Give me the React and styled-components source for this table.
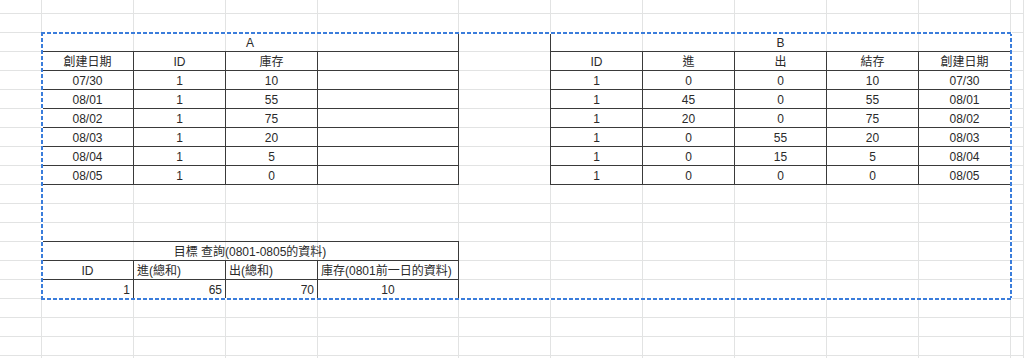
import React from 'react'
import styled, { createGlobalStyle } from 'styled-components'

const GlobalStyle = createGlobalStyle`
  html, body {
    margin: 0;
    padding: 0;
    background: #fff;
  }
  body {
    font-family: 'Liberation Sans', Arial, 'Noto Sans CJK TC', sans-serif;
    font-size: 12px;
    color: #2a2a2a;
  }
`

const COLS = '42px repeat(3, 92px) 141px repeat(6, 92px) 1fr'
const ROWS = '14px repeat(19, 19px)'
const ROW_COUNT = 20
const COL_COUNT = 12

const Page = styled.div`
  width: 1024px;
  height: 358px;
  overflow: hidden;
  display: grid;
`

const Layer = styled.div`
  grid-area: 1 / 1;
  display: grid;
  grid-template-columns: ${COLS};
  grid-template-rows: ${ROWS};
`

const GridCell = styled.div`
  box-sizing: border-box;
  border-right: 1px solid #e2e3e3;
  border-bottom: 1px solid #e2e3e3;
`

const Placed = styled.div`
  grid-column: ${p => p.$col};
  grid-row: ${p => p.$row};
  margin: -1px 0 0 -1px;
`

const Table = styled.div`
  display: grid;
  grid-template-columns: ${p => p.$cols};
  grid-auto-rows: 19px;
  border-left: 1px solid #3a3a3a;
  border-top: 1px solid #3a3a3a;
`

const TCell = styled.div`
  box-sizing: border-box;
  grid-column: ${p => (p.$span ? `span ${p.$span}` : 'auto')};
  border-right: 1px solid #3a3a3a;
  border-bottom: 1px solid #3a3a3a;
  padding: 1px 3px 0;
  line-height: 19px;
  white-space: nowrap;
  overflow: hidden;
  text-align: ${p => p.$align || 'center'};
`

const Marquee = styled.div`
  grid-column: 2 / 12;
  grid-row: 3 / 17;
  margin: -1px -1px -1px -1px;
  pointer-events: none;
  background:
    repeating-linear-gradient(90deg, #3b7ddb 0 4px, #fff 4px 6px) top / 100% 2px no-repeat,
    repeating-linear-gradient(90deg, #3b7ddb 0 4px, #fff 4px 6px) bottom / 100% 2px no-repeat,
    repeating-linear-gradient(180deg, #3b7ddb 0 4px, #fff 4px 6px) left / 2px 100% no-repeat,
    repeating-linear-gradient(180deg, #3b7ddb 0 4px, #fff 4px 6px) right / 2px 100% no-repeat;
`

const stockA = [
  ['07/30', '1', '10', ''],
  ['08/01', '1', '55', ''],
  ['08/02', '1', '75', ''],
  ['08/03', '1', '20', ''],
  ['08/04', '1', '5', ''],
  ['08/05', '1', '0', ''],
]

const flowB = [
  ['1', '0', '0', '10', '07/30'],
  ['1', '45', '0', '55', '08/01'],
  ['1', '20', '0', '75', '08/02'],
  ['1', '0', '55', '20', '08/03'],
  ['1', '0', '15', '5', '08/04'],
  ['1', '0', '0', '0', '08/05'],
]

function DataTable({ cols, title, heads, rows }) {
  return (
    <Table $cols={cols}>
      <TCell $span={heads.length}>{title}</TCell>
      {heads.map((h, i) => <TCell key={'h' + i}>{h}</TCell>)}
      {rows.map((r, ri) => r.map((v, ci) => <TCell key={ri + '-' + ci}>{v}</TCell>))}
    </Table>
  )
}

export default function App() {
  return (
    <>
      <GlobalStyle />
      <Page>
        <Layer>
          {Array.from({ length: ROW_COUNT * COL_COUNT }, (_, i) => <GridCell key={i} />)}
        </Layer>
        <Layer>
          <Placed $col="2 / 6" $row="3 / 11">
            <DataTable
              cols="repeat(3, 92px) 141px"
              title="A"
              heads={['創建日期', 'ID', '庫存', '']}
              rows={stockA}
            />
          </Placed>
          <Placed $col="7 / 12" $row="3 / 11">
            <DataTable
              cols="repeat(5, 92px)"
              title="B"
              heads={['ID', '進', '出', '結存', '創建日期']}
              rows={flowB}
            />
          </Placed>
          <Placed $col="2 / 6" $row="14 / 17">
            <Table $cols="repeat(3, 92px) 141px">
              <TCell $span={4}>目標 查詢(0801-0805的資料)</TCell>
              <TCell>ID</TCell>
              <TCell $align="left">進(總和)</TCell>
              <TCell $align="left">出(總和)</TCell>
              <TCell $align="left">庫存(0801前一日的資料)</TCell>
              <TCell $align="right">1</TCell>
              <TCell $align="right">65</TCell>
              <TCell $align="right">70</TCell>
              <TCell>10</TCell>
            </Table>
          </Placed>
          <Marquee />
        </Layer>
      </Page>
    </>
  )
}
